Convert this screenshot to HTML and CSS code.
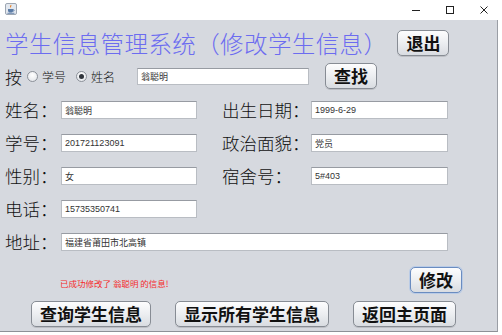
FILE: index.html
```html
<!DOCTYPE html>
<html lang="zh-CN">
<head>
    <meta charset="UTF-8">
    <title>学生信息管理系统</title>
    <link rel="stylesheet" href="styles.css">
</head>
<body>
    <div class="titlebar">
        <svg class="app-icon" width="12" height="12" viewBox="0 0 12 12">
            <rect x="0.5" y="0.5" width="11" height="11" rx="1.5" fill="#e3e8ef" stroke="#9ea7b3"/>
            <path d="M6 1.8 C7.3 3 5 3.8 6.2 5.2 C5 4.6 4.6 3.4 6 1.8Z" fill="#e76f00"/>
            <path d="M3 6 H8.2 V7.4 C8.2 8.8 7.2 9.4 5.6 9.4 C4 9.4 3 8.8 3 7.4Z" fill="#5a7ba6"/>
            <path d="M8.2 6.6 C9.6 6.6 9.6 8.2 8 8.2" fill="none" stroke="#5a7ba6" stroke-width="0.8"/>
            <rect x="2.4" y="9.8" width="7" height="0.9" fill="#5a7ba6"/>
        </svg>
        <div class="controls">
            <svg width="10" height="10" viewBox="0 0 10 10"><path d="M1 5.5 H9" stroke="#222" stroke-width="1"/></svg>
            <svg width="10" height="10" viewBox="0 0 10 10"><rect x="1.5" y="1.5" width="7" height="7" fill="none" stroke="#222" stroke-width="1"/></svg>
            <svg width="10" height="10" viewBox="0 0 10 10"><path d="M1.5 1.5 L8.5 8.5 M8.5 1.5 L1.5 8.5" stroke="#222" stroke-width="1"/></svg>
        </div>
    </div>

    <div class="window">
        <div class="head">
            <h1>学生信息管理系统（修改学生信息）</h1>
            <button class="btn">退出</button>
        </div>

        <div class="search">
            <span class="by">按</span>
            <label class="radio"><input type="radio" name="by"> 学号</label>
            <label class="radio"><input type="radio" name="by" checked> 姓名</label>
            <input class="field search-field" type="text" value="翁聪明">
            <button class="btn btn-find">查找</button>
        </div>

        <div class="form">
            <label>姓名：</label>
            <input class="field" type="text" value="翁聪明">
            <span></span>
            <label>出生日期：</label>
            <input class="field" type="text" value="1999-6-29">

            <label>学号：</label>
            <input class="field" type="text" value="201721123091">
            <span></span>
            <label>政治面貌：</label>
            <input class="field" type="text" value="党员">

            <label>性别：</label>
            <input class="field" type="text" value="女">
            <span></span>
            <label>宿舍号：</label>
            <input class="field" type="text" value="5#403">

            <label>电话：</label>
            <input class="field" type="text" value="15735350741">
            <span class="rest"></span>

            <label>地址：</label>
            <input class="field wide" type="text" value="福建省莆田市北高镇">
        </div>

        <div class="status">
            <span class="msg">已成功修改了 翁聪明 的信息!</span>
            <button class="btn btn-focus">修改</button>
        </div>

        <div class="nav">
            <button class="btn">查询学生信息</button>
            <button class="btn">显示所有学生信息</button>
            <button class="btn">返回主页面</button>
        </div>
    </div>
</body>
</html>
```

FILE: styles.css
```css
body {
    margin: 0;
    width: 502px;
    height: 335px;
    background-color: #ffffff;
    font-family: "Noto Sans CJK SC", sans-serif;
    overflow: hidden;
}

.titlebar {
    height: 20px;
    display: flex;
    align-items: center;
    justify-content: space-between;
    background-color: #fff;
}

.app-icon {
    margin-left: 5px;
    margin-top: -2px;
}

.controls {
    display: flex;
    gap: 24px;
    margin-right: 13px;
}

.window {
    width: 498px;
    height: 312px;
    background-color: #d6d9df;
    border-right: 1px solid #9a9ea5;
    border-bottom: 1px solid #8d9197;
    padding-left: 5px;
    box-sizing: border-box;
}

/* buttons, Nimbus look */
.btn {
    height: 26px;
    padding: 0 8px;
    border: 1px solid #878c94;
    border-radius: 5px;
    background: linear-gradient(#fdfdfe, #eceef1 50%, #d9dce1);
    box-shadow: 0 1px 0 rgba(0, 0, 0, 0.12);
    font-family: "Noto Sans CJK SC", sans-serif;
    font-size: 17px;
    font-weight: 700;
    line-height: 22px;
    color: #111;
    cursor: pointer;
}

.btn-focus {
    border-color: #6a8cc0;
    box-shadow: 0 0 0 1px #b9cbe6;
}

.head {
    display: flex;
    align-items: center;
    padding-top: 10px;
    height: 26px;
}

.head h1 {
    margin: 0;
    font-size: 23.5px;
    font-weight: 300;
    line-height: 26px;
    letter-spacing: 0.4px;
    color: #6c6cf0;
    margin-right: 10px;
    white-space: nowrap;
}

.search {
    display: flex;
    align-items: center;
    margin-top: 7px;
    height: 26px;
}

.by {
    font-size: 17px;
    font-weight: 300;
    color: #111;
}

.radio {
    display: flex;
    align-items: center;
    gap: 4px;
    margin-left: 5px;
    font-size: 12px;
    font-weight: 300;
    color: #111;
}

.radio + .radio {
    margin-left: 10px;
}

.radio input {
    appearance: none;
    margin: 0;
    width: 11px;
    height: 11px;
    border: 1px solid #8c9199;
    border-radius: 50%;
    background: radial-gradient(circle at 50% 35%, #ffffff, #dfe2e7);
    box-sizing: border-box;
    display: grid;
    place-items: center;
}

.radio input:checked::after {
    content: "";
    width: 5px;
    height: 5px;
    border-radius: 50%;
    background-color: #2f343b;
}

.field {
    height: 18px;
    box-sizing: border-box;
    padding: 0 3px;
    border: 1px solid #b9bdc3;
    border-top-color: #979ba2;
    background-color: #fff;
    font-family: "Liberation Sans", "Noto Sans CJK SC", sans-serif;
    font-size: 9px;
    color: #333;
    outline: none;
}

.search-field {
    width: 172px;
    height: 17px;
    margin-left: 22px;
}

.btn-find {
    margin-left: 16px;
}

.form {
    display: grid;
    grid-template-columns: 56px 136px 25px 89px 137px;
    grid-auto-rows: 18px;
    row-gap: 15px;
    align-items: center;
    margin-top: 12px;
}

.form label {
    font-size: 17.5px;
    font-weight: 300;
    line-height: 18px;
    color: #111;
    white-space: nowrap;
}

.form .rest {
    grid-column: 3 / 6;
}

.form .wide {
    grid-column: 2 / 6;
}

.status {
    display: flex;
    align-items: center;
    justify-content: space-between;
    width: 457px;
    margin-top: 16px;
    padding-left: 55px;
    box-sizing: border-box;
}

.msg {
    font-size: 8.5px;
    color: #f52a2a;
    margin-top: 6px;
}

.nav {
    display: flex;
    gap: 24px;
    margin-top: 8px;
    padding-left: 26px;
}
```
